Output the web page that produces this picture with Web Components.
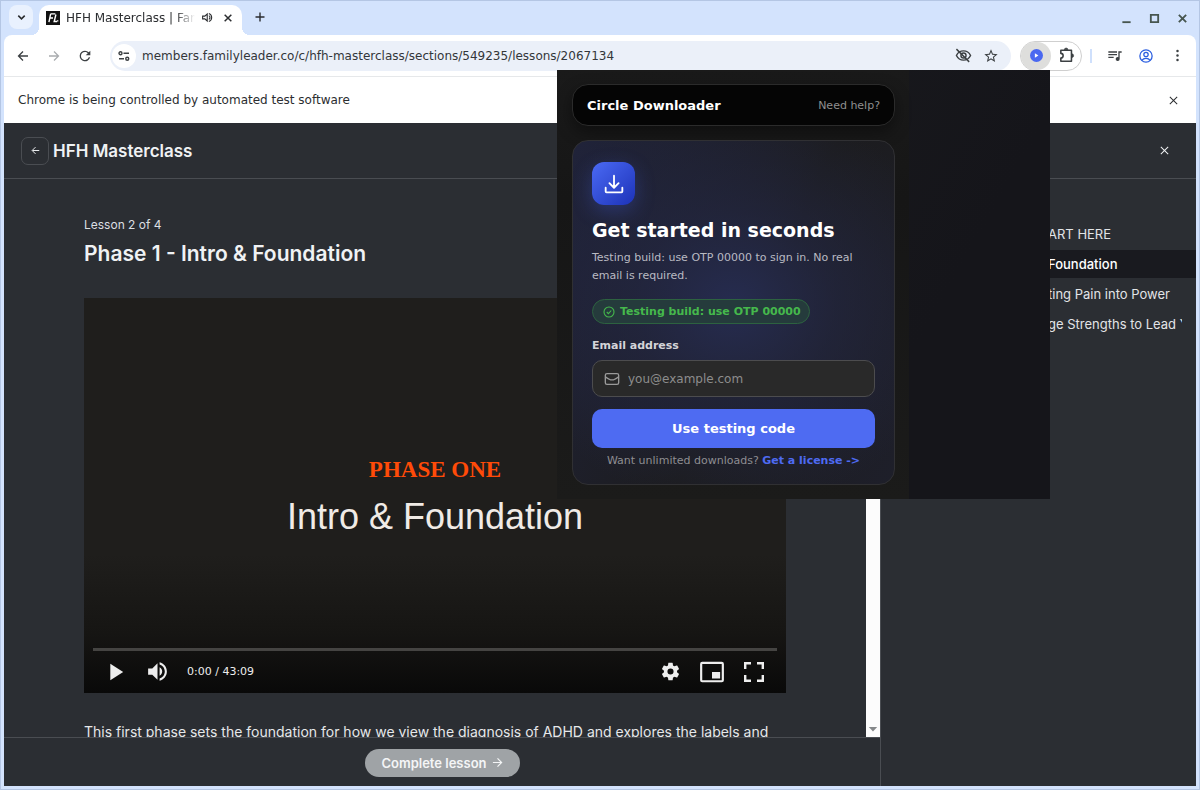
<!DOCTYPE html>
<html lang="en">
<head>
<meta charset="utf-8">
<meta name="viewport" content="width=device-width, initial-scale=1">
<title>HFH Masterclass</title>
<style>
html, body { margin: 0; height: 100%; }
body { font-family: "DejaVu Sans", sans-serif; color: #1f1f1f; }
</style>
</head>
<body>
<browser-window>
  <tab-strip></tab-strip>
  <browser-toolbar></browser-toolbar>
  <info-bar>Chrome is being controlled by automated test software</info-bar>
  <course-page></course-page>
  <extension-popup slot="popup"></extension-popup>
</browser-window>
<script>
const define = (name, html, setup) => {
  const template = document.createElement('template');
  template.innerHTML = `<style>
    *, *::before, *::after { box-sizing: border-box; }
    button { font: inherit; color: inherit; background: none; border: 0; padding: 0; margin: 0; }
    button, .center { display: flex; align-items: center; justify-content: center; }
    a { color: inherit; text-decoration: none; }
    h1, h2, p, ul { margin: 0; padding: 0; }
  </style>` + html;
  customElements.define(name, class extends HTMLElement {
    constructor() {
      super();
      this.attachShadow({ mode: 'open' }).append(template.content.cloneNode(true));
      if (setup) setup(this);
    }
  });
};

const stroke = (d, w = 2) => `<path d="${d}" fill="none" stroke="currentColor" stroke-width="${w}"/>`;
const fill = d => `<path d="${d}" fill="currentColor"/>`;
const ICONS = {
  chevron: stroke('M5 8l7 7 7-7', 3.4),
  close: stroke('M4 4l16 16M20 4L4 20', 2.2),
  closeBold: stroke('M4 4l16 16M20 4L4 20', 3.6),
  plus: stroke('M12 3v18M3 12h18', 2.8),
  back: stroke('M22 12H4M12 3l-9 9 9 9', 2.6),
  forward: stroke('M2 12h18M12 3l9 9-9 9', 2.6),
  reload: fill('M17.65 6.35A7.95 7.95 0 0 0 12 4a8 8 0 1 0 7.73 10h-2.08A6 6 0 1 1 12 6c1.66 0 3.14.69 4.22 1.78L13 11h7V4z'),
  tune: '<g fill="none" stroke="currentColor" stroke-width="2.8"><circle cx="5" cy="6.500" r="3"/><path d="M11 6.500h11M2 17.500h10"/><circle cx="18.500" cy="17.500" r="3"/></g>',
  speaker: '<path d="M3 9.500v5h4l4.500 4V5.500L7 9.500z" fill="none" stroke="currentColor" stroke-width="2"/>' + stroke('M14.500 8.500a4 4 0 0 1 0 7M14.500 4.500a8 8 0 0 1 0 15'),
  volume: fill('M3 9v6h4l5 5V4L7 9zm13.500 3c0-1.770-1.020-3.290-2.500-4.030v8.050c1.480-.73 2.500-2.250 2.500-4.020zM14 3.230v2.060c2.890.86 5 3.540 5 6.710s-2.110 5.850-5 6.710v2.060c4.010-.91 7-4.490 7-8.770s-2.990-7.860-7-8.770z'),
  eyeOff: '<g fill="none" stroke="currentColor" stroke-width="2"><path d="M2 12c2-4 5.500-6.500 10-6.500S20 8 22 12c-2 4-5.500 6.500-10 6.500S4 16 2 12z"/><circle cx="12" cy="12" r="3.600"/><path d="M2 3l18 18"/></g>',
  star: fill('M22 9.240l-7.190-.62L12 2 9.190 8.630 2 9.240l5.460 4.730L5.820 21 12 17.270 18.180 21l-1.630-7.030zM12 15.400l-3.760 2.270 1-4.280-3.320-2.880 4.380-.38L12 6.100l1.710 4.040 4.380.38-3.320 2.880 1 4.280z'),
  puzzle: '<path d="M4 4.500h15v15.500H4v-4.500a3 3 0 0 0 0-6.500z" fill="none" stroke="currentColor" stroke-width="2.200" stroke-linejoin="round"/><path d="M9 4a2.500 2.500 0 0 1 5 0zM19.500 9.700a2.500 2.500 0 0 1 0 5z" fill="currentColor" stroke="currentColor"/>',
  music: fill('M2 5h13v2H2zM2 9h13v2H2zM2 13h8v2H2zM17 5h5v2h-3v9.500a3 3 0 1 1-2-2.800z'),
  profile: '<g fill="none" stroke="currentColor" stroke-width="2.200"><circle cx="12" cy="12" r="10.500"/><circle cx="12" cy="9.500" r="3.700"/><path d="M5 19.500c3-4.500 11-4.500 14 0"/></g>',
  more: '<g fill="currentColor"><circle cx="12" cy="3.500" r="2.300"/><circle cx="12" cy="12" r="2.300"/><circle cx="12" cy="20.500" r="2.300"/></g>',
  minimize: stroke('M3 20h18', 4),
  maximize: stroke('M4 4h16v16H4z', 4),
  closeWindow: stroke('M4 4l16 16M20 4L4 20', 4),
  extension: '<circle cx="12" cy="12" r="12" fill="#4a68f0"/><path d="M9 8v8l6.500-4z" fill="#fff"/>',
  play: fill('M8 5v14l11-7z'),
  gear: fill('M19.430 12.980c.04-.32.070-.64.070-.98s-.03-.66-.07-.98l2.110-1.650c.19-.15.240-.42.120-.64l-2-3.460c-.12-.22-.39-.3-.61-.22l-2.490 1c-.52-.4-1.080-.73-1.690-.98l-.38-2.650A.49.49 0 0 0 14 2h-4c-.25 0-.46.180-.49.420l-.38 2.650c-.61.250-1.170.590-1.690.980l-2.490-1c-.23-.09-.49 0-.61.220l-2 3.460c-.13.220-.07.490.120.640l2.110 1.650c-.04.320-.07.650-.07.980s.03.660.070.980l-2.110 1.650c-.19.150-.24.420-.12.640l2 3.460c.12.220.39.300.61.220l2.490-1c.52.400 1.080.730 1.690.980l.38 2.650c.03.240.240.420.490.420h4c.25 0 .46-.18.490-.42l.38-2.650c.61-.25 1.170-.59 1.690-.98l2.490 1c.23.090.490 0 .61-.22l2-3.460c.12-.22.070-.49-.12-.64zM12 15.500a3.500 3.500 0 1 1 0-7 3.500 3.500 0 0 1 0 7z'),
  pip: '<rect x="2" y="3.500" width="20" height="17" rx="1" fill="none" stroke="currentColor" stroke-width="2"/><path d="M12 12h7.500v6H12z" fill="currentColor"/>',
  fullscreen: stroke('M3.200 9V3.200H9M15 3.200h5.800V9M20.800 15v5.800H15M9 20.800H3.200V15', 2.4),
  download: '<g fill="none" stroke="currentColor" stroke-width="2.200" stroke-linecap="round" stroke-linejoin="round"><path d="M12 2v14M6.500 11L12 16.500l5.500-5.500M2 16.500V21q0 1 1 1h18q1 0 1-1v-4.500"/></g>',
  check: '<g fill="none" stroke="currentColor" stroke-width="2.200"><circle cx="12" cy="12" r="10"/><path d="M7.500 12l3.300 3.300L16.500 9"/></g>',
  mail: '<g fill="none" stroke="currentColor" stroke-width="2" stroke-linejoin="round"><rect x="2" y="4" width="20" height="16" rx="2.500"/><path d="M2 8.500c8 6.500 12 6.500 20 0"/></g>',
  arrowDown: fill('M2 7h20L12 18z'),
  fl: '<rect width="24" height="24" fill="#111"/><path d="M8 5h8M6 12h6M8 5L5 19M17 6l-3 12h5M20 16v2" stroke="#fff" stroke-width="2.400" fill="none"/>'
};
customElements.define('ui-icon', class extends HTMLElement {
  connectedCallback() {
    if (this.shadowRoot) return;
    const size = this.getAttribute('size') || 16;
    this.attachShadow({ mode: 'open' }).innerHTML = `
      <style>:host { display: block; flex: none; width: ${size}px; height: ${size}px; } svg { display: block; }</style>
      <svg width="${size}" height="${size}" viewBox="0 0 24 24" aria-hidden="true">${ICONS[this.getAttribute('name')]}</svg>`;
  }
});

define('browser-window', `
<style>
  :host { display: flex; flex-direction: column; position: relative; box-sizing: border-box; height: 100vh; overflow: hidden;
    padding: 0 3px 3px; background: #d3e3fd; border: 1px solid #b4c6e4; }
</style>
<slot></slot><slot name="popup"></slot>`);

define('tab-strip', `
<style>
  :host { display: flex; align-items: flex-end; flex: none; height: 34px; padding: 0 6px 0 5px; font-size: 12px; color: #2b2d30; }
  .search { width: 24px; height: 24px; border-radius: 8px; background: #e9f1fe; margin: 0 6px 6px 0; }
  .tab { position: relative; display: flex; align-items: center; gap: 6px; width: 203px; height: 30px; padding: 0 6px 5px 7px; background: #fff; border-radius: 10px 10px 0 0; }
  .tab::before, .tab::after { content: ""; position: absolute; bottom: 0; width: 8px; height: 8px; }
  .tab::before { left: -8px; background: radial-gradient(circle at 0 0, #d3e3fd 8px, #fff 8px); }
  .tab::after { right: -8px; background: radial-gradient(circle at 100% 0, #d3e3fd 8px, #fff 8px); }
  .title { flex: 1; overflow: hidden; white-space: nowrap; -webkit-mask: linear-gradient(to left, transparent, #000 20px); }
  .new { width: 24px; height: 24px; margin: 0 auto 6px 6px; }
  .controls { display: flex; gap: 12px; height: 34px; align-items: center; color: #47564f; }
  .controls button { width: 16px; height: 16px; }
  .shut { width: 16px; }
</style>
<button class="search" aria-label="Search tabs"><ui-icon name="chevron" size="11"></ui-icon></button>
<div class="tab"><ui-icon name="fl" size="14"></ui-icon><span class="title">HFH Masterclass | Family Leader</span>
  <button aria-label="Mute tab"><ui-icon name="speaker" size="13"></ui-icon></button>
  <button class="shut" aria-label="Close tab"><ui-icon name="closeBold" size="10"></ui-icon></button></div>
<button class="new" aria-label="New tab"><ui-icon name="plus" size="12"></ui-icon></button>
<div class="controls">
  <button aria-label="Minimize"><ui-icon name="minimize" size="11"></ui-icon></button>
  <button aria-label="Maximize"><ui-icon name="maximize" size="11"></ui-icon></button>
  <button aria-label="Close window"><ui-icon name="closeWindow" size="11"></ui-icon></button>
</div>`);

define('browser-toolbar', `
<style>
  :host { display: flex; align-items: center; flex: none; height: 41px; padding: 0 7px; background: #fff; color: #3c4043;
    border-radius: 8px 8px 0 0; border-bottom: 1px solid #e6e8ea; }
  nav { display: flex; gap: 7px; margin-right: 13px; }
  nav button, .tool { width: 24px; height: 24px; }
  .off { color: #a9acaf; }
  .omnibox { flex: 1; display: flex; align-items: center; height: 30px; padding: 0 8px 0 2px; border-radius: 15px; background: #ebf0f9; }
  .site { width: 24px; height: 24px; border-radius: 12px; background: #fff; margin-right: 6px; }
  input { flex: 1; min-width: 0; border: 0; padding: 0; background: none; outline: 0; font: 12px "DejaVu Sans", sans-serif; color: #33363a; }
  .omnibox .tool + .tool { margin-left: 4px; }
  .pill { display: flex; width: 62px; height: 30px; margin: 0 8px 0 9px; border: 1px solid #cfcfcf; border-radius: 15px; }
  .pill button { flex: 1; height: 28px; }
  .pill .on { border-radius: 14px; background: #dededc; }
  .divider { width: 2px; height: 14px; background: #cfe0fc; margin-right: 11px; }
  .end { display: flex; gap: 7px; }
  .user { color: #2c5fe0; }
</style>
<nav><button aria-label="Back"><ui-icon name="back" size="12"></ui-icon></button>
<button class="off" aria-label="Forward"><ui-icon name="forward" size="12"></ui-icon></button>
<button aria-label="Reload"><ui-icon name="reload"></ui-icon></button></nav>
<div class="omnibox">
  <button class="site" aria-label="Site information"><ui-icon name="tune" size="12"></ui-icon></button>
  <input type="text" aria-label="Address" value="members.familyleader.co/c/hfh-masterclass/sections/549235/lessons/2067134">
  <button class="tool" aria-label="Tracking protection"><ui-icon name="eyeOff" size="17"></ui-icon></button>
  <button class="tool" aria-label="Bookmark"><ui-icon name="star"></ui-icon></button>
</div>
<div class="pill"><button class="on" aria-label="Circle Downloader"><ui-icon name="extension" size="13"></ui-icon></button>
<button aria-label="Extensions"><ui-icon name="puzzle" size="17"></ui-icon></button></div>
<div class="divider"></div>
<div class="end"><button class="tool" aria-label="Media"><ui-icon name="music"></ui-icon></button>
<button class="tool user" aria-label="Profile"><ui-icon name="profile" size="14"></ui-icon></button>
<button class="tool" aria-label="Menu"><ui-icon name="more" size="13"></ui-icon></button></div>`);

define('info-bar', `
<style>
  :host { display: flex; align-items: center; justify-content: space-between; flex: none; height: 46px; padding: 0 12px 0 14px;
    background: #fff; font-size: 12px; color: #2b2d30; }
  button { width: 22px; height: 22px; }
</style>
<span><slot></slot></span><button aria-label="Dismiss"><ui-icon name="close" size="11"></ui-icon></button>`);

define('course-page', `
<style>
  :host { display: flex; flex-direction: column; flex: 1; min-height: 0; background: #2b2e33; color: #f0f2f4;
    font-family: Inter, sans-serif; font-size: 14px; --line: #4a4d52; }
  header { display: flex; align-items: center; gap: 4px; flex: none; height: 56px; padding: 0 21px 0 17px; border-bottom: 1px solid var(--line); }
  h1 { flex: 1; font-size: 17px; font-weight: 600; line-height: 24px; }
  .back { width: 28px; height: 28px; border: 1px solid var(--line); border-radius: 7px; }
  header .close { width: 22px; height: 22px; }
  .body { display: flex; flex: 1; min-height: 0; }
  main { display: flex; flex-direction: column; flex: 1; min-width: 0; }
  .scroll { display: flex; flex: 1; min-height: 0; overflow: hidden; }
  article { flex: 1; min-width: 0; padding: 36px 80px 0; }
  .step { font-size: 12px; line-height: 20px; color: #dcdfe2; }
  h2 { font-size: 21px; font-weight: 600; line-height: 28px; margin: 5px 0 30px; }
  .text { margin-top: 28px; font-size: 14px; line-height: 22px; white-space: nowrap; color: #e6e8ea; }
  .bar { display: flex; align-items: flex-end; justify-content: center; flex: none; width: 14px; padding-bottom: 3px; background: #fcfcfc; color: #85888a; }
  footer { display: flex; align-items: center; justify-content: center; flex: none; height: 49px; padding-top: 1px; border-top: 1px solid var(--line); }
  .complete { gap: 5px; height: 28px; width: 155px; border-radius: 14px; background: #9fa3a6; color: #f4f5f6; font-size: 13px; font-weight: 600; }
</style>
<header><button class="back" aria-label="Back"><ui-icon name="back" size="9"></ui-icon></button><h1>HFH Masterclass</h1>
<button class="close" aria-label="Close"><ui-icon name="close" size="11"></ui-icon></button></header>
<div class="body">
  <main>
    <div class="scroll"><article>
      <p class="step">Lesson 2 of 4</p>
      <h2>Phase 1 - Intro &amp; Foundation</h2>
      <video-player></video-player>
      <p class="text">This first phase sets the foundation for how we view the diagnosis of ADHD and explores the labels and</p>
    </article><div class="bar"><ui-icon name="arrowDown" size="10"></ui-icon></div></div>
    <footer><button class="complete">Complete lesson <ui-icon name="forward" size="11"></ui-icon></button></footer>
  </main>
  <lesson-sidebar></lesson-sidebar>
</div>`);

define('video-player', `
<style>
  :host { display: flex; flex-direction: column; aspect-ratio: 16 / 9; background: linear-gradient(#1f1e1c 65%, #161513 85%, #090909); }
  .title { flex: 1; display: flex; flex-direction: column; align-items: center; justify-content: flex-end; padding-bottom: 108px; }
  .phase { font: 700 23px/28px "Liberation Serif", serif; color: #ff4b08; }
  .name { margin-top: 10px; font: 36px/46px "Liberation Sans", sans-serif; color: #f0ebe6; white-space: nowrap; }
  .track { height: 3px; margin: 0 9px; background: #454442; }
  .controls { display: flex; align-items: center; gap: 18px; height: 42px; padding: 0 20px 0 19px; color: #eee; font: 11px "DejaVu Sans", sans-serif; }
  .controls button { width: 24px; height: 24px; }
  .time { flex: 1; }
</style>
<div class="title"><div class="phase">PHASE ONE</div><div class="name">Intro &amp; Foundation</div></div>
<div class="track"></div>
<div class="controls">
  <button aria-label="Play"><ui-icon name="play" size="28"></ui-icon></button>
  <button aria-label="Mute"><ui-icon name="volume" size="25"></ui-icon></button>
  <span class="time">0:00 / 43:09</span>
  <button aria-label="Settings"><ui-icon name="gear" size="21"></ui-icon></button>
  <button aria-label="Picture in picture"><ui-icon name="pip" size="26"></ui-icon></button>
  <button aria-label="Full screen"><ui-icon name="fullscreen" size="24"></ui-icon></button>
</div>`);

define('lesson-sidebar', `
<style>
  :host { display: block; flex: none; box-sizing: border-box; width: 316px; padding-top: 41px; border-left: 1px solid var(--line); }
  ul { list-style: none; }
  li { height: 28px; margin-bottom: 2px; padding: 0 14px 0 167px; line-height: 28px; font-size: 13px; color: #e2e4e7; white-space: nowrap; }
  a { display: block; overflow: hidden; }
  .current { background: #191a1f; color: #fff; font-weight: 500; }
</style>
<ul><li><a href="#">ART HERE</a></li><li class="current"><a href="#" aria-current="page">Foundation</a></li>
<li><a href="#">ting Pain into Power</a></li><li><a href="#">ge Strengths to Lead Y</a></li></ul>`);

define('extension-popup', `
<style>
  :host { display: block; position: absolute; top: 69px; right: 149px; width: 493px; height: 429px; box-sizing: border-box;
    background: linear-gradient(120deg, #1b1c1f, #15151a 70%); color: #fff; }
  .body { width: 352px; height: 100%; padding: 14px 14px 14px 15px; background: linear-gradient(#1a1a1a, #161616 30%, #1b1b1a); }
  header { display: flex; align-items: center; justify-content: space-between; height: 42px; padding: 0 14px; border: 1px solid #2b2b2b;
    border-radius: 16px; background: #050505; box-shadow: 0 6px 16px rgba(0,0,0,.4); }
  h1 { font-size: 13px; }
  header a { font-size: 11px; color: #8f8f8f; }
  section { margin-top: 14px; height: 345px; padding: 21px 19px; border: 1px solid #303033; border-radius: 16px;
    background: radial-gradient(ellipse 70% 60% at 50% 48%, #262c50, rgba(36,40,70,.6) 45%, transparent), linear-gradient(115deg, #20233a, #1c1c1e 55%, #1e1f2a); }
  .logo { width: 43px; height: 43px; border-radius: 12px; background: linear-gradient(135deg, #4b6af4, #1c32b8); box-shadow: 0 6px 20px rgba(70,100,240,.3); }
  h2 { margin-top: 12px; font-size: 19px; line-height: 26px; white-space: nowrap; }
  .intro { margin-top: 6px; font-size: 11px; line-height: 18px; color: #b9bac2; }
  .badge { display: inline-flex; align-items: center; gap: 5px; height: 25px; margin-top: 14px; padding: 0 8px 0 10px; border: 1px solid #2d6240; border-radius: 13px;
    background: #253b3c; color: #45b94c; font-size: 11px; font-weight: 700; white-space: nowrap; }
  label { display: block; margin-top: 14px; font-size: 11px; line-height: 16px; font-weight: 700; color: #d4d4d8; }
  .field { display: flex; align-items: center; gap: 8px; height: 37px; margin-top: 6px; padding: 0 11px; border: 1px solid #4c4c4e; border-radius: 10px; background: #292929; color: #9a9a9a; }
  input { flex: 1; min-width: 0; border: 0; padding: 0; outline: 0; background: none; color: #fff; font: 12px "DejaVu Sans", sans-serif; }
  input::placeholder { color: #8d8d8d; opacity: 1; }
  .submit { width: 100%; height: 39px; margin-top: 12px; border-radius: 10px; background: #4e6bf2; font-size: 13px; font-weight: 700; }
  .more { margin-top: 4px; text-align: center; font-size: 11px; line-height: 18px; color: #8e8e92; white-space: nowrap; }
  .more a { color: #4e6bf2; font-weight: 700; }
</style>
<div class="body">
  <header><h1>Circle Downloader</h1><a href="#">Need help?</a></header>
  <section>
    <div class="logo center"><ui-icon name="download" size="20"></ui-icon></div>
    <h2>Get started in seconds</h2>
    <p class="intro">Testing build: use OTP 00000 to sign in. No real<br>email is required.</p>
    <div class="badge"><ui-icon name="check" size="12"></ui-icon>Testing build: use OTP 00000</div>
    <label for="email">Email address</label>
    <div class="field"><ui-icon name="mail" size="16"></ui-icon><input id="email" type="email" placeholder="you@example.com"></div>
    <button class="submit">Use testing code</button>
    <p class="more">Want unlimited downloads? <a href="#">Get a license -&gt;</a></p>
  </section>
</div>`);
</script>
</body>
</html>
